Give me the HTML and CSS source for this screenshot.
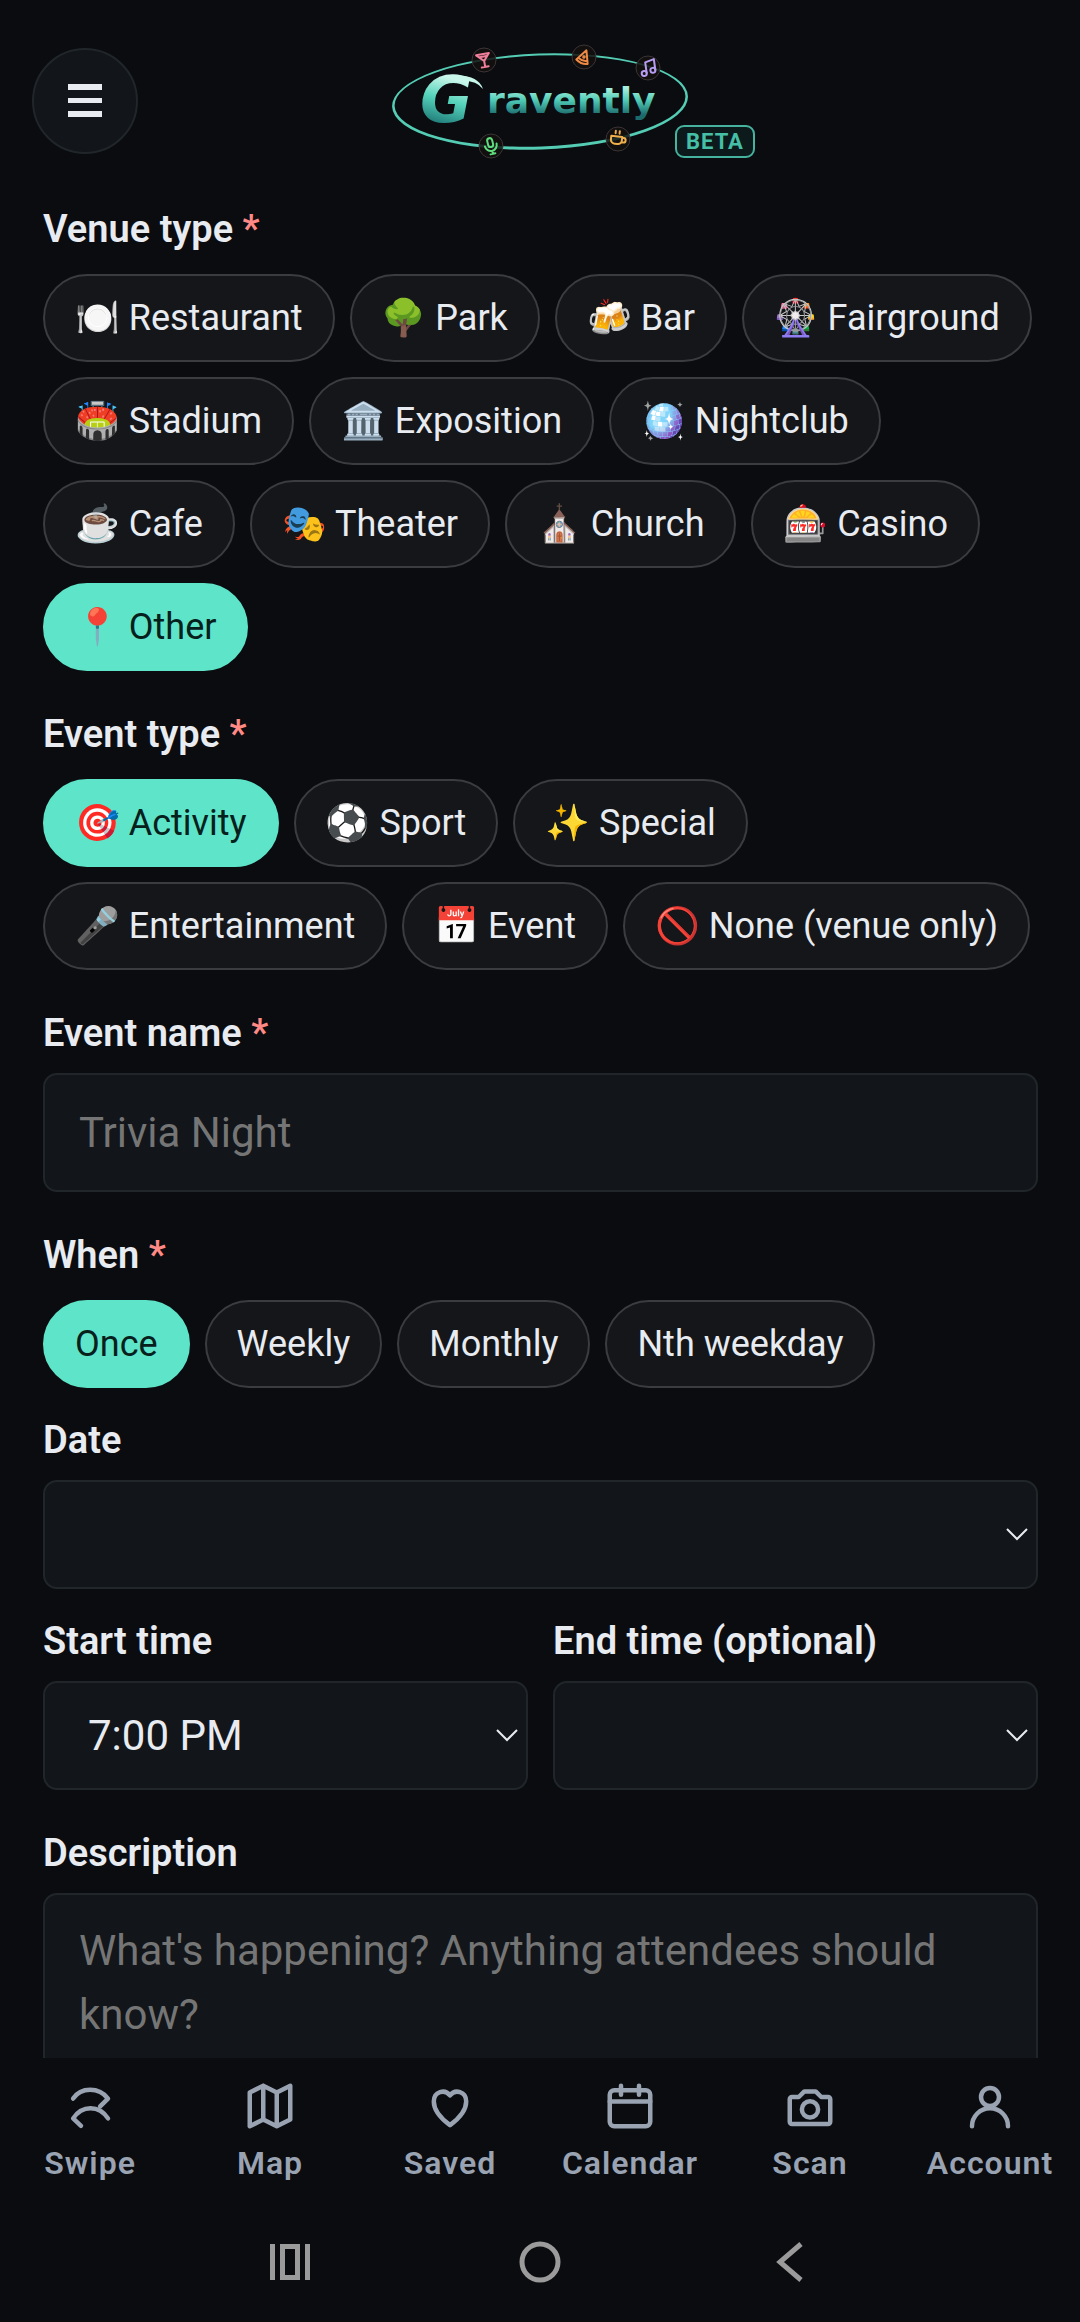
FILE: index.html
```html
<!DOCTYPE html>
<html lang="en">
<head>
    <meta charset="UTF-8">
    <meta name="viewport" content="width=device-width, initial-scale=1.0">
    <title>Gravently</title>
    <link rel="stylesheet" href="styles.css">
</head>
<body>
    <div class="scroll-area">
        <header class="header">
            <button class="menu-button" type="button" aria-label="Menu">
                <svg viewBox="0 0 34 34" width="34" height="34" fill="currentColor">
                    <rect y="0" width="34" height="6"/>
                    <rect y="14" width="34" height="5"/>
                    <rect y="27" width="34" height="6"/>
                </svg>
            </button>
            <div class="logo">
                <svg viewBox="0 0 300 120" width="300" height="120" role="img" aria-label="Gravently">
                    <defs>
                        <linearGradient id="letters" x1="0" y1="0" x2="0" y2="1">
                            <stop offset="0.2" stop-color="#a5f0dc"/>
                            <stop offset="0.5" stop-color="#4fc9b4"/>
                            <stop offset="0.85" stop-color="#1c6a6c"/>
                        </linearGradient>
                        <linearGradient id="bigLetter" x1="0.6" y1="0" x2="0.4" y2="1">
                            <stop offset="0.2" stop-color="#c9f7ea"/>
                            <stop offset="0.5" stop-color="#55d3bb"/>
                            <stop offset="0.85" stop-color="#1f7a78"/>
                        </linearGradient>
                    </defs>
                    <!-- orbit, thicker at the bottom -->
                    <path transform="rotate(-2 150 60)" fill="#55cdb4" fill-rule="evenodd" d="M2 60.500a148 48 0 0 1 296 0a148 48 0 0 1 -296 0zM4.500 60a145.500 45.500 0 0 0 291 0a145.500 45.500 0 0 0 -291 0z"/>
                    <text class="logo-g" x="30" y="81" fill="url(#bigLetter)">G</text>
                    <!-- comet tail off the top of the big letter -->
                    <path fill="#c9f7ea" d="M62 35Q88 33 93 48Q86 38 66 40z"/>
                    <text class="logo-text" x="97" y="72" fill="url(#letters)">ravently</text>

                    <g fill="#14100f" fill-opacity="0.85" stroke="#3d3436" stroke-width="1">
                        <circle cx="94" cy="19" r="12"/>
                        <circle cx="194" cy="16" r="12"/>
                        <circle cx="258" cy="27" r="12"/>
                        <circle cx="101" cy="105" r="12"/>
                        <circle cx="228" cy="98" r="12"/>
                    </g>
                    <g fill="none" stroke-width="2" stroke-linecap="round" stroke-linejoin="round">
                        <!-- cocktail -->
                        <g transform="translate(94 19) rotate(-10)" stroke="#f07f9c">
                            <path d="M-7 -6h13L0 1zM0 1v6M-3.500 7h7M-4 -3.500h7"/>
                        </g>
                        <!-- pizza -->
                        <g transform="translate(194 16) rotate(12)" stroke="#ef8a45">
                            <path d="M1 -7L5 6Q-1 8 -7 4zM-5 2Q0 5 4 3"/>
                            <circle cx="0" cy="0" r="0.800"/>
                        </g>
                        <!-- notes -->
                        <g transform="translate(258 27) rotate(-8)" stroke="#b79cf2">
                            <path d="M-2 5V-6L7 -8V3"/>
                            <circle cx="-4.500" cy="5" r="2.500"/>
                            <circle cx="4.500" cy="3" r="2.500"/>
                        </g>
                        <!-- microphone -->
                        <g transform="translate(101 105) rotate(-14)" stroke="#5fdc7d">
                            <rect x="-2.500" y="-8" width="5" height="9" rx="2.500"/>
                            <path d="M-6 -1a6 6 0 0 0 12 0M0 5v3M-2.500 8h5"/>
                        </g>
                        <!-- coffee -->
                        <g transform="translate(228 98) rotate(6)" stroke="#f0b04c">
                            <path d="M-7 -2.500H4V1a4 4 0 0 1 -4 4H-3a4 4 0 0 1 -4 -4zM4 -1.500h1.500a2 2 0 0 1 0 4.500H3.500M-3 -8v2.500M1 -8v2.500"/>
                        </g>
                    </g>
                </svg>
                <span class="beta-badge">BETA</span>
            </div>
        </header>

        <form class="event-form">
            <div class="field" role="group" aria-labelledby="venueLabel">
                <span class="label" id="venueLabel">Venue type <span class="required">*</span></span>
                <div class="chips">
                    <button type="button" class="chip">🍽️ Restaurant</button>
                    <button type="button" class="chip">🌳 Park</button>
                    <button type="button" class="chip">🍻 Bar</button>
                    <button type="button" class="chip">🎡 Fairground</button>
                    <button type="button" class="chip">🏟️ Stadium</button>
                    <button type="button" class="chip">🏛️ Exposition</button>
                    <button type="button" class="chip">🪩 Nightclub</button>
                    <button type="button" class="chip">☕ Cafe</button>
                    <button type="button" class="chip">🎭 Theater</button>
                    <button type="button" class="chip">⛪ Church</button>
                    <button type="button" class="chip">🎰 Casino</button>
                    <button type="button" class="chip active" aria-pressed="true">📍 Other</button>
                </div>
            </div>

            <div class="field" role="group" aria-labelledby="eventLabel">
                <span class="label" id="eventLabel">Event type <span class="required">*</span></span>
                <div class="chips">
                    <button type="button" class="chip active" aria-pressed="true">🎯 Activity</button>
                    <button type="button" class="chip">⚽ Sport</button>
                    <button type="button" class="chip">✨ Special</button>
                    <button type="button" class="chip">🎤 Entertainment</button>
                    <button type="button" class="chip">📅 Event</button>
                    <button type="button" class="chip">🚫 None (venue only)</button>
                </div>
            </div>

            <div class="field">
                <label class="label" for="eventName">Event name <span class="required">*</span></label>
                <input class="control" type="text" id="eventName" placeholder="Trivia Night">
            </div>

            <div class="field">
                <div role="group" aria-labelledby="whenLabel">
                    <span class="label" id="whenLabel">When <span class="required">*</span></span>
                    <div class="chips">
                        <button type="button" class="chip active" aria-pressed="true">Once</button>
                        <button type="button" class="chip">Weekly</button>
                        <button type="button" class="chip">Monthly</button>
                        <button type="button" class="chip">Nth weekday</button>
                    </div>
                </div>
                <div class="sub-field">
                    <label class="label" for="date">Date</label>
                    <div class="select-wrap">
                        <select class="control" id="date"><option></option></select>
                        <svg class="chevron" viewBox="0 0 24 14" width="24" height="14"><path d="M2 1l10 10L22 1"/></svg>
                    </div>
                </div>
                <div class="time-row">
                    <div class="sub-field">
                        <label class="label" for="startTime">Start time</label>
                        <div class="select-wrap">
                            <select class="control" id="startTime"><option>7:00 PM</option></select>
                            <svg class="chevron" viewBox="0 0 24 14" width="24" height="14"><path d="M2 1l10 10L22 1"/></svg>
                        </div>
                    </div>
                    <div class="sub-field">
                        <label class="label" for="endTime">End time (optional)</label>
                        <div class="select-wrap">
                            <select class="control" id="endTime"><option></option></select>
                            <svg class="chevron" viewBox="0 0 24 14" width="24" height="14"><path d="M2 1l10 10L22 1"/></svg>
                        </div>
                    </div>
                </div>
            </div>

            <div class="field">
                <label class="label" for="description">Description</label>
                <textarea class="control" id="description" rows="4" placeholder="What's happening? Anything attendees should know?"></textarea>
            </div>
        </form>
    </div>

    <nav class="tab-bar">
        <a href="#swipe">
            <svg viewBox="0 0 24 24"><path d="M4.500 8.700C8 3.500 16 3.500 20 8.700L16.500 12.200M20 17.500C16 11.500 8.500 11.500 4.500 17.500L8 20.800"/></svg>
            Swipe
        </a>
        <a href="#map">
            <svg viewBox="0 0 24 24"><path d="M3 6l6-3 6 3 6-3v15l-6 3-6-3-6 3zM9 3v15M15 6v15"/></svg>
            Map
        </a>
        <a href="#saved">
            <svg viewBox="0 0 24 24"><path d="M12 20.500C9 18.300 4.800 14.500 4.800 10C4.800 5.500 9.800 4.300 12 7.300C14.200 4.300 19.200 5.500 19.200 10C19.200 14.500 15 18.300 12 20.500z"/></svg>
            Saved
        </a>
        <a href="#calendar">
            <svg viewBox="0 0 24 24"><rect x="3" y="5" width="18" height="16" rx="2"/><path d="M3 10h18M8 3v4M16 3v4"/></svg>
            Calendar
        </a>
        <a href="#scan">
            <svg viewBox="0 0 24 24"><path d="M4 8h3l2.500-2.500h5L17 8h3a1 1 0 0 1 1 1v10a1 1 0 0 1-1 1H4a1 1 0 0 1-1-1V9a1 1 0 0 1 1-1z"/><circle cx="12" cy="13.500" r="3.600"/></svg>
            Scan
        </a>
        <a href="#account">
            <svg viewBox="0 0 24 24"><circle cx="12" cy="8" r="4"/><path d="M4 21a8 8 0 0 1 16 0"/></svg>
            Account
        </a>
    </nav>

    <div class="system-bar">
        <button type="button" aria-label="Recent apps">
            <svg viewBox="0 0 48 48"><path d="M6.500 6v36M41.500 6v36M16.500 8.500h15v31h-15z"/></svg>
        </button>
        <button type="button" aria-label="Home">
            <svg viewBox="0 0 48 48"><circle cx="24" cy="24" r="18"/></svg>
        </button>
        <button type="button" aria-label="Back">
            <svg viewBox="0 0 48 48"><path d="M35 6L14 24l21 18"/></svg>
        </button>
    </div>
</body>
</html>
```
FILE: styles.css
```css
* {
    box-sizing: border-box;
}

body {
    margin: 0;
    height: 100vh;
    display: flex;
    flex-direction: column;
    background-color: #0a0c10;
    color: #e8ebf0;
    font-family: Roboto, "Noto Color Emoji", sans-serif;
}

button,
input,
select,
textarea {
    font-family: inherit;
}

.scroll-area {
    flex: 1;
    min-height: 0;
    overflow-y: auto;
    scrollbar-width: none;
}

/* Header */
.header {
    display: grid;
    grid-template-columns: 1fr auto 1fr;
    align-items: center;
    padding: 41px 32px 0;
}

.menu-button {
    display: flex;
    align-items: center;
    justify-content: center;
    width: 106px;
    height: 106px;
    padding: 0;
    background-color: #12161a;
    border: 2px solid #20262a;
    border-radius: 50%;
    color: #e8ebf0;
}

.logo {
    position: relative;
}

.logo svg {
    display: block;
}

.logo-g {
    font: italic bold 64px "DejaVu Sans", sans-serif;
}

.logo-text {
    font: bold 36px "DejaVu Sans", sans-serif;
}

.beta-badge {
    position: absolute;
    top: 84px;
    left: 285px;
    padding: 0 9px;
    border: 2px solid #45b39d;
    border-radius: 9px;
    background-color: #0c1a1c;
    color: #45bfa6;
    font-size: 22px;
    font-weight: 700;
    line-height: 29px;
    letter-spacing: 1px;
}

/* Form */
.event-form {
    display: flex;
    flex-direction: column;
    gap: 41px;
    padding: 46px 42px 40px 43px;
}

.label {
    display: block;
    margin-bottom: 18px;
    font-size: 38px;
    font-weight: 600;
    line-height: 44px;
}

.required {
    color: #ff8a85;
}

.chips {
    display: flex;
    flex-wrap: wrap;
    gap: 15px;
    padding-top: 5px;
}

.chip {
    height: 88px;
    padding: 0 30px;
    background-color: #141619;
    border: 2px solid #3a3c40;
    border-radius: 44px;
    color: #e8ebf0;
    font-size: 36px;
    cursor: pointer;
}

.chip.active {
    background-color: #5ee4c8;
    border-color: #5ee4c8;
    color: #06201c;
}

.control {
    display: block;
    width: 100%;
    padding: 24px 34px;
    background-color: #12161a;
    border: 2px solid #20262a;
    border-radius: 14px;
    color: #e8ebf0;
    font-size: 42px;
    line-height: 64px;
    resize: none;
}

.control::placeholder {
    color: #757575;
}

input.control {
    height: 119px;
}

select.control {
    height: 109px;
    padding: 0 43px;
    appearance: none;
}

.select-wrap {
    position: relative;
}

.chevron {
    position: absolute;
    right: 9px;
    top: 48px;
    fill: none;
    stroke: #e8ebf0;
    stroke-width: 2;
    pointer-events: none;
}

.sub-field {
    margin-top: 30px;
}

.time-row {
    display: grid;
    grid-template-columns: 1fr 1fr;
    gap: 25px;
}

/* Bottom navigation */
.tab-bar {
    display: grid;
    grid-template-columns: repeat(6, 1fr);
    padding: 21px 0 20px;
}

.tab-bar a {
    display: flex;
    flex-direction: column;
    align-items: center;
    gap: 11px;
    color: #9aa3b2;
    font-size: 32px;
    font-weight: 600;
    line-height: 38px;
    letter-spacing: 1px;
    text-decoration: none;
}

.tab-bar svg {
    width: 54px;
    height: 54px;
    fill: none;
    stroke: currentColor;
    stroke-width: 2;
    stroke-linecap: round;
    stroke-linejoin: round;
}

.system-bar {
    display: flex;
    justify-content: center;
    gap: 202px;
    height: 120px;
}

.system-bar button {
    padding: 0;
    background: none;
    border: none;
}

.system-bar svg {
    display: block;
    width: 48px;
    height: 48px;
    fill: none;
    stroke: #9b9b9b;
    stroke-width: 5;
}
```
